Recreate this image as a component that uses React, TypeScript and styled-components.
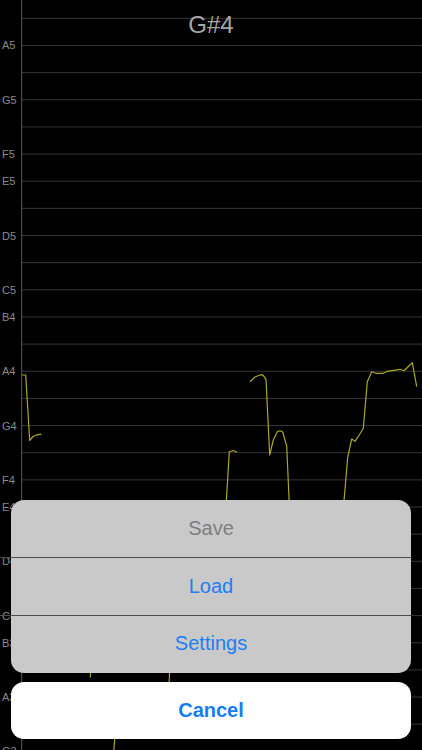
import React from "react";
import styled, { createGlobalStyle } from "styled-components";

const GlobalStyle = createGlobalStyle`
  html, body {
    margin: 0;
    padding: 0;
    background: #000;
  }
  #root {
    width: 422px;
    height: 750px;
  }
`;

const Screen = styled.div`
  position: relative;
  width: 422px;
  height: 750px;
  overflow: hidden;
  background: #000;
  font-family: "Liberation Sans", Arial, sans-serif;
`;

const ChartSvg = styled.svg`
  display: block;
  width: 422px;
  height: 750px;
`;

const Title = styled.div`
  position: absolute;
  top: 0;
  left: 0;
  right: 0;
  padding-top: 12.7px;
  text-align: center;
  font-size: 24px;
  line-height: 24px;
  color: #a6a6a6;
`;

const SheetOverlay = styled.div`
  position: absolute;
  left: 0;
  right: 0;
  bottom: 0;
  padding: 0 10.7px 10.7px;
  display: flex;
  flex-direction: column;
  gap: 9.3px;
`;

const Group = styled.div`
  background: #c9c9c9;
  border-radius: 13px;
  display: flex;
  flex-direction: column;
`;

const ActionRow = styled.div<{ $tone: "disabled" | "action"; $divider?: boolean }>`
  position: relative;
  height: 57.7px;
  display: flex;
  align-items: center;
  justify-content: center;
  font-size: 20px;
  color: ${(p) => (p.$tone === "disabled" ? "#7e7e7e" : "#1c7ff3")};
  &::before {
    content: "";
    display: ${(p) => (p.$divider ? "block" : "none")};
    position: absolute;
    top: 0;
    left: -10.7px;
    right: 0;
    height: 1px;
    background: #4c4c4c;
  }
`;

const CancelButton = styled.div`
  height: 57.3px;
  background: #fff;
  border-radius: 13px;
  display: flex;
  align-items: center;
  justify-content: center;
  font-size: 20px;
  font-weight: 700;
  color: #167df4;
`;

const STEP = 27.15;
const TOP = 18.3;
const labels: Record<number, string> = {
  1: "A5",
  3: "G5",
  5: "F5",
  6: "E5",
  8: "D5",
  10: "C5",
  11: "B4",
  13: "A4",
  15: "G4",
  17: "F4",
  18: "E4",
  20: "D4",
  22: "C4",
  23: "B3",
  25: "A3",
  27: "G3",
};

const segments: number[][][] = [
  [[22, 375], [25.7, 375], [29.7, 440.5], [33, 436.5], [37, 434.8], [41.3, 434.2]],
  [[225.5, 515], [229.3, 451.7], [233.3, 450.5], [237, 452.2]],
  [
    [250, 381.7], [255, 377], [260.7, 374.7], [263.3, 375.3], [266, 379.3],
    [269.7, 455], [273.3, 440], [277.3, 431.7], [280, 430.7], [282.7, 432],
    [286.7, 446], [290, 520],
  ],
  [
    [342.8, 515], [347.7, 457.3], [351.7, 439], [355, 441.3], [359.3, 435],
    [363.3, 428.3], [367.3, 381.7], [371.7, 371.7], [376, 373.3], [383.3, 373.3],
    [387.3, 371.3], [400, 369.3], [404, 370.7], [412.3, 362.7], [416.7, 386.7],
  ],
  [[90.2, 677.5], [92, 660]],
  [[168.5, 700], [170, 660]],
  [[113, 760], [115, 735]],
];

const PitchChart: React.FC = () => {
  const rows = Array.from({ length: 28 }, (_, k) => k);
  return (
    <ChartSvg viewBox="0 0 422 750">
      {rows.map((k) => {
        const y = TOP + STEP * k;
        return (
          <line key={`g${k}`} x1={22} x2={422} y1={y} y2={y} stroke="#363636" strokeWidth={1} />
        );
      })}
      <line x1={21.7} x2={21.7} y1={0} y2={750} stroke="#5a5a5a" strokeWidth={1} />
      {rows
        .filter((k) => labels[k])
        .map((k) => (
          <text
            key={`l${k}`}
            x={2}
            y={TOP + STEP * k + 4}
            fontSize={11}
            fill="#8a8a8a"
            fontFamily='"Liberation Sans", Arial, sans-serif'
          >
            {labels[k]}
          </text>
        ))}
      {segments.map((pts, i) => (
        <polyline
          key={`s${i}`}
          points={pts.map((p) => p.join(",")).join(" ")}
          fill="none"
          stroke="#aba62a"
          strokeWidth={1.2}
          strokeLinejoin="round"
        />
      ))}
    </ChartSvg>
  );
};

export default function App() {
  return (
    <>
      <GlobalStyle />
      <Screen>
        <PitchChart />
        <Title>G#4</Title>
        <SheetOverlay>
          <Group>
            <ActionRow $tone="disabled">Save</ActionRow>
            <ActionRow $tone="action" $divider>
              Load
            </ActionRow>
            <ActionRow $tone="action" $divider>
              Settings
            </ActionRow>
          </Group>
          <CancelButton>Cancel</CancelButton>
        </SheetOverlay>
      </Screen>
    </>
  );
}
